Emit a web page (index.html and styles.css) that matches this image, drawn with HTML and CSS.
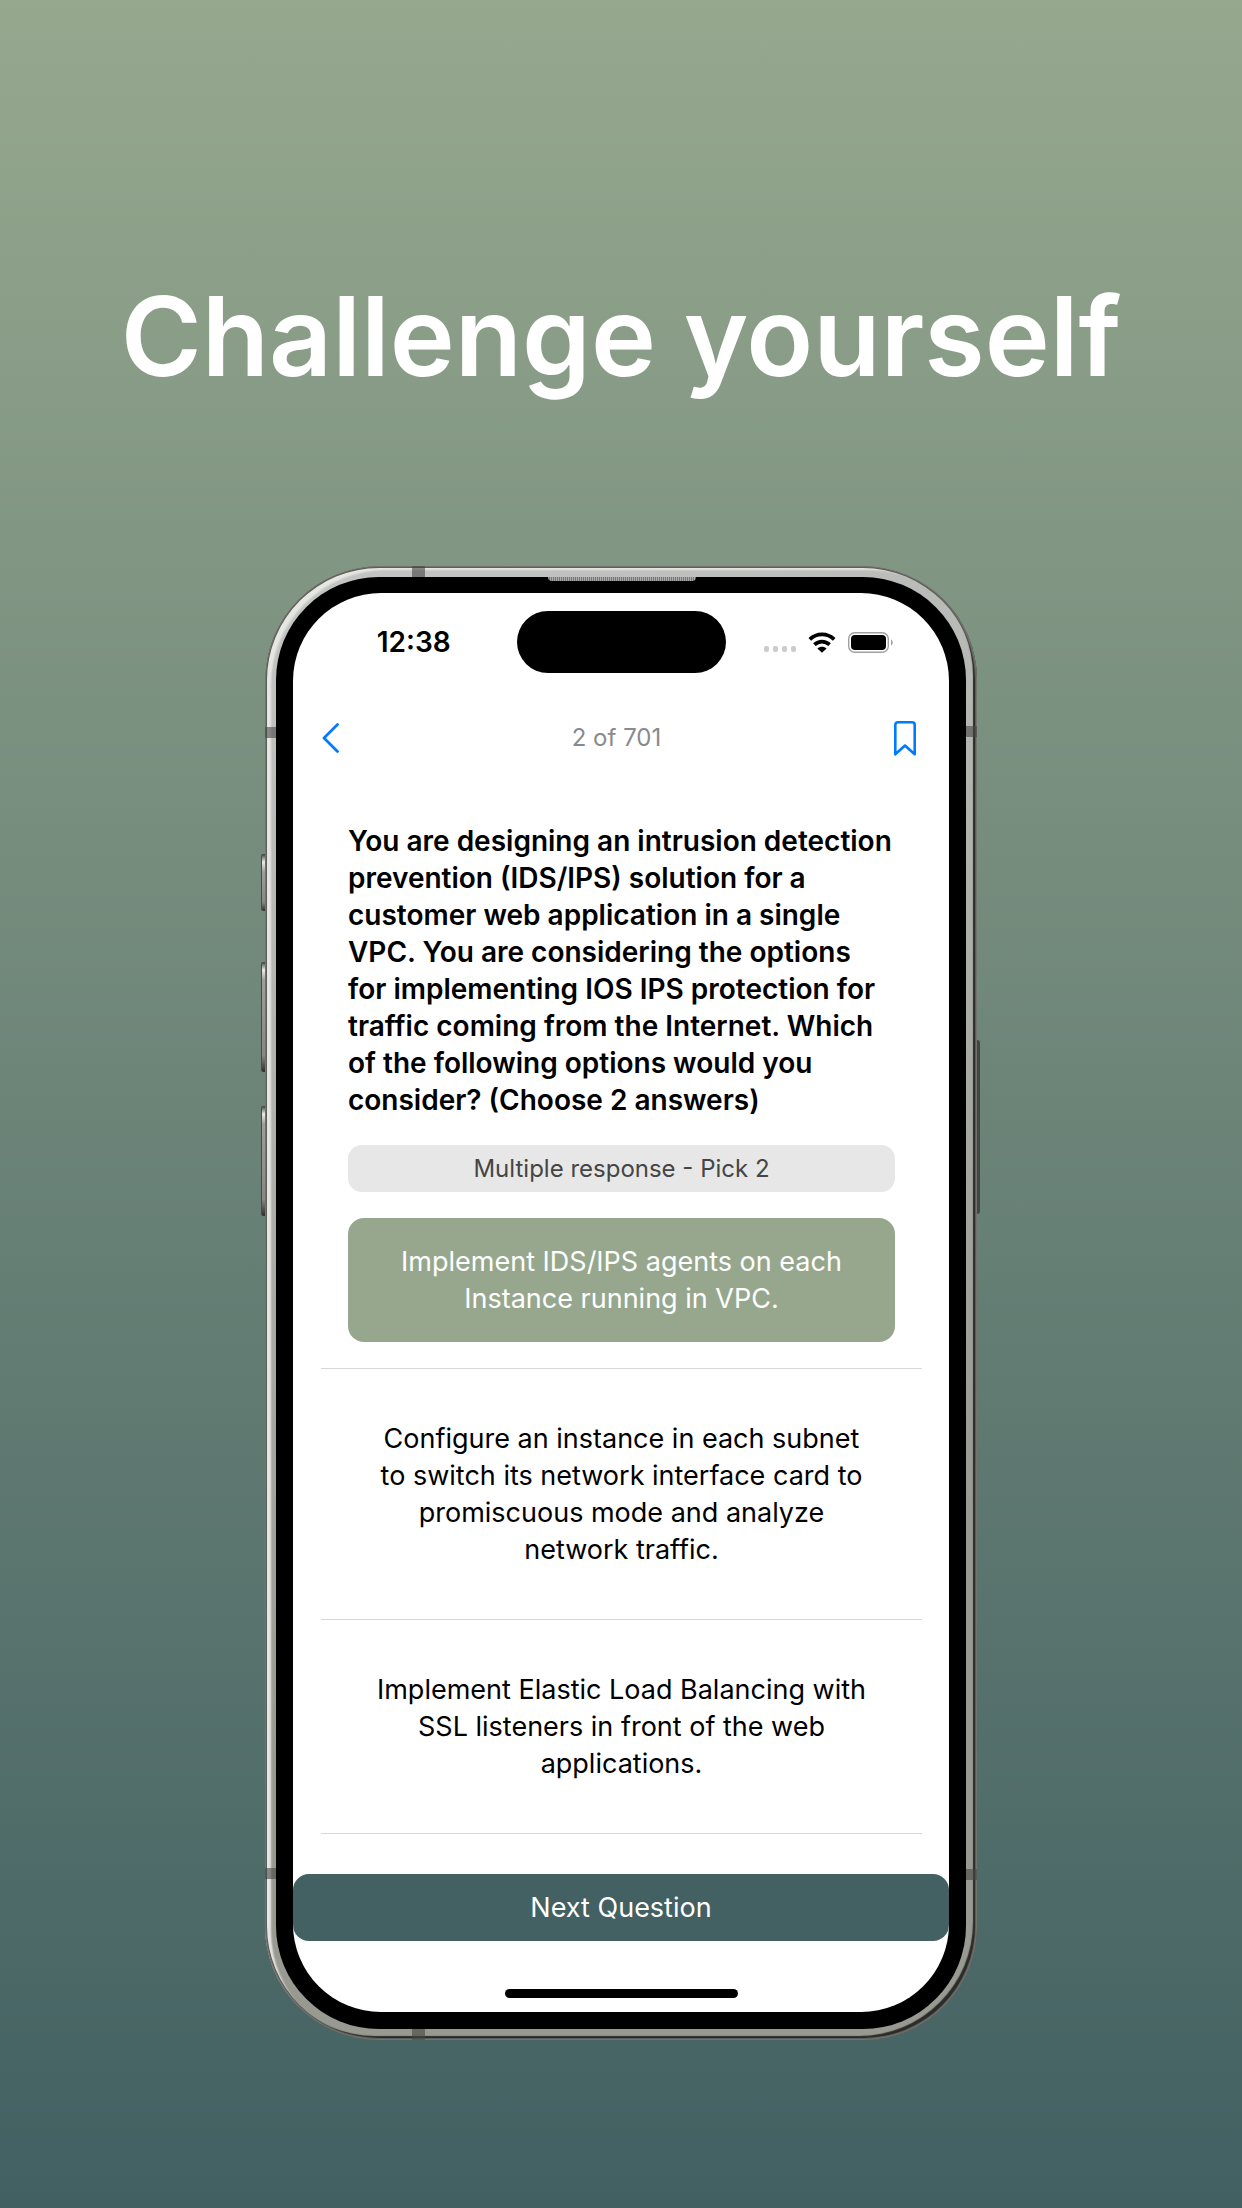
FILE: index.html
```html
<!DOCTYPE html>
<html lang="en">
<head>
  <meta charset="utf-8">
  <meta name="viewport" content="width=device-width, initial-scale=1">
  <title>Challenge yourself</title>
  <link rel="stylesheet" href="styles.css">
</head>
<body>
  <main class="page">
    <h1 class="headline">Challenge yourself</h1>

    <div class="phone">
      <span class="side-key side-key--action"></span>
      <span class="side-key side-key--up"></span>
      <span class="side-key side-key--down"></span>
      <span class="side-key side-key--power"></span>
      <span class="band band--top"></span>
      <span class="band band--bottom"></span>
      <span class="band band--left-high"></span>
      <span class="band band--right-high"></span>
      <span class="band band--left-low"></span>
      <span class="band band--right-low"></span>
      <span class="speaker"></span>

      <div class="bezel">
        <div class="screen">
          <header class="status">
            <time class="clock">12:38</time>
            <span class="island"></span>
            <div class="indicators">
              <span class="signal"><i></i><i></i><i></i><i></i></span>
              <svg class="wifi" viewBox="0 0 28 21" aria-hidden="true">
                <path d="M1.800 7.400C8.800 0.700 19.200 0.700 26.200 7.400M6.400 12.600C10.900 8.500 17.100 8.500 21.600 12.600" fill="none" stroke="#000" stroke-width="3.800"/>
                <path d="M9.400 16.500C12 14.300 16 14.300 18.600 16.500L14 20.800Z"/>
              </svg>
              <svg class="battery" viewBox="0 0 45 21" aria-hidden="true">
                <rect x="0.700" y="0.700" width="39.600" height="19.600" rx="6" fill="#fff" stroke="#a0a0a0" stroke-width="1.400"/>
                <rect x="3" y="3" width="35" height="15" rx="4"/>
                <path d="M43 7.500C45.300 8.500 45.300 12.500 43 13.500Z" fill="#a0a0a0"/>
              </svg>
            </div>
          </header>

          <nav class="navbar">
            <button class="icon-button" type="button" aria-label="Back">
              <svg class="chevron" viewBox="0 0 17 30" aria-hidden="true">
                <path d="M15.500 1.500L2 15L15.500 28.500" fill="none" stroke="#007aff" stroke-width="2.800" stroke-linecap="round" stroke-linejoin="round"/>
              </svg>
            </button>
            <span class="progress">2 of 701</span>
            <button class="icon-button" type="button" aria-label="Bookmark">
              <svg class="bookmark" viewBox="0 0 22 35" aria-hidden="true">
                <path d="M1.300 33.300V4Q1.300 1.300 4 1.300H18Q20.700 1.300 20.700 4V33.300L11 24.500Z" fill="none" stroke="#007aff" stroke-width="2.600" stroke-linejoin="round"/>
              </svg>
            </button>
          </nav>

          <section class="quiz">
            <h2 class="question">You are designing an intrusion detection<br>prevention (IDS/IPS) solution for a<br>customer web application in a single<br>VPC. You are considering the options<br>for implementing IOS IPS protection for<br>traffic coming from the Internet. Which<br>of the following options would you<br>consider? (Choose 2 answers)</h2>
            <p class="hint">Multiple response - Pick 2</p>
            <ul class="options">
              <li class="option"><button class="answer answer--picked" type="button" aria-pressed="true">Implement IDS/IPS agents on each<br>Instance running in VPC.</button></li>
              <li class="option"><button class="answer" type="button" aria-pressed="false">Configure an instance in each subnet<br>to switch its network interface card to<br>promiscuous mode and analyze<br>network traffic.</button></li>
              <li class="option"><button class="answer" type="button" aria-pressed="false">Implement Elastic Load Balancing with<br>SSL listeners in front of the web<br>applications.</button></li>
            </ul>
          </section>

          <button class="next" type="button">Next Question</button>
          <span class="home-bar"></span>
        </div>
      </div>
    </div>
  </main>
</body>
</html>
```
FILE: styles.css
```css
* {
  box-sizing: border-box;
}

body {
  margin: 0;
  min-height: 100vh;
  background: linear-gradient(#96a88e, #426062);
  font-family: Inter, "Liberation Sans", sans-serif;
  color: #000;
}

button {
  border: 0;
  background: none;
  font: inherit;
  color: inherit;
  cursor: pointer;
}

.page {
  display: flex;
  flex-direction: column;
  align-items: center;
  padding: 260px 16px 168px;
}

.headline {
  margin: 0 0 154px;
  font-size: 110px;
  font-weight: 600;
  line-height: 152px;
  text-align: center;
  color: #fff;
}

/* Device body: metal rim, black bezel, screen */
.phone {
  position: relative;
  width: 100%;
  max-width: 712px;
  padding: 11px;
  border-radius: 114px;
  background: linear-gradient(160deg, #c4c6c3, #b0b2ae 30%, #989990 70%);
  box-shadow:
    inset 0 0 0 1px #74746e,
    inset 0 0 0 2px #5d5d59,
    inset -4px -4px 1px 0 #2b2b2a,
    inset 7px 5px 2px -1px #e6e6e3;
}

.bezel {
  padding: 16px 17px 17px;
  border-radius: 103px;
  background: #000;
}

.screen {
  display: flex;
  flex-direction: column;
  border-radius: 88px;
  background: #fff;
  overflow: hidden;
}

.side-key {
  position: absolute;
  left: -4px;
  width: 4px;
  border-radius: 3px 0 0 3px;
  background: linear-gradient(#3a3a38, #ececea 8px, #a09e9a 18px, #8a8783 85%, #2c2c2b);
  box-shadow: inset 1px 0 0 #4a4a48;
}

.side-key--action { top: 288px; height: 57px; }
.side-key--up { top: 396px; height: 110px; }
.side-key--down { top: 540px; height: 110px; }

.side-key--power {
  top: 474px;
  right: -3px;
  left: auto;
  width: 3px;
  height: 174px;
  border-radius: 0 3px 3px 0;
  background: #454543;
  box-shadow: none;
}

.band {
  position: absolute;
  width: 11px;
  height: 11px;
  background: rgba(70, 70, 68, 0.6);
}

.band--top { top: 0; left: 147px; width: 13px; }
.band--bottom { bottom: 0; left: 147px; width: 13px; }
.band--left-high { top: 161px; left: 0; }
.band--right-high { top: 160px; right: 0; }
.band--left-low { bottom: 161px; left: 0; }
.band--right-low { bottom: 160px; right: 0; }

.speaker {
  position: absolute;
  top: 11px;
  left: 50%;
  width: 148px;
  height: 4px;
  margin-left: -73px;
  border-radius: 0 0 4px 4px;
  background: repeating-linear-gradient(90deg, #aaa 0 1px, #777 1px 2px);
}

.status {
  display: grid;
  grid-template-columns: 1fr 209px 1fr;
  align-items: center;
  padding-top: 18px;
}

.clock {
  padding-left: 18px;
  font-size: 28px;
  font-weight: 600;
  line-height: 34px;
  text-align: center;
}

.island {
  height: 62px;
  border-radius: 31px;
  background: #000;
}

.indicators {
  display: flex;
  align-items: center;
  gap: 12px;
  padding-left: 38px;
}

.signal {
  display: flex;
  gap: 4px;
  padding-top: 13px;
}

.signal i {
  width: 5px;
  height: 6px;
  border-radius: 2px;
  background: #ccc;
}

.wifi {
  width: 28px;
  height: 21px;
}

.battery {
  width: 45px;
  height: 21px;
}

.navbar {
  display: flex;
  align-items: center;
  justify-content: space-between;
  padding: 43px 33px 0 29px;
}

.icon-button {
  display: flex;
  align-items: center;
  height: 44px;
  padding: 0;
}

.chevron {
  width: 17px;
  height: 30px;
}

.bookmark {
  width: 22px;
  height: 35px;
}

.progress {
  font-size: 24px;
  line-height: 32px;
  color: #8a8a8e;
}

.quiz {
  padding: 63px 27px 40px 28px;
}

.question {
  margin: 0 27px;
  font-size: 28px;
  font-weight: 600;
  line-height: 37px;
  white-space: nowrap;
}

.hint {
  margin: 26px 27px 0;
  border-radius: 14px;
  background: #e7e7e7;
  font-size: 24px;
  line-height: 47px;
  text-align: center;
  color: #454545;
}

.options {
  margin: 0;
  padding: 0;
  list-style: none;
}

.option {
  padding: 26px 27px;
  border-bottom: 1px solid #d8d8d8;
}

.answer {
  display: block;
  width: 100%;
  padding: 25px 0;
  border-radius: 16px;
  font-size: 27px;
  line-height: 37px;
  text-align: center;
}

.answer--picked {
  background: #96a78e;
  color: #fff;
}

.next {
  height: 67px;
  border-radius: 16px;
  background: #436062;
  font-size: 27px;
  line-height: 37px;
  color: #fff;
}

.home-bar {
  align-self: center;
  width: 233px;
  height: 9px;
  margin: 48px 0 14px;
  border-radius: 5px;
  background: #000;
}
```
